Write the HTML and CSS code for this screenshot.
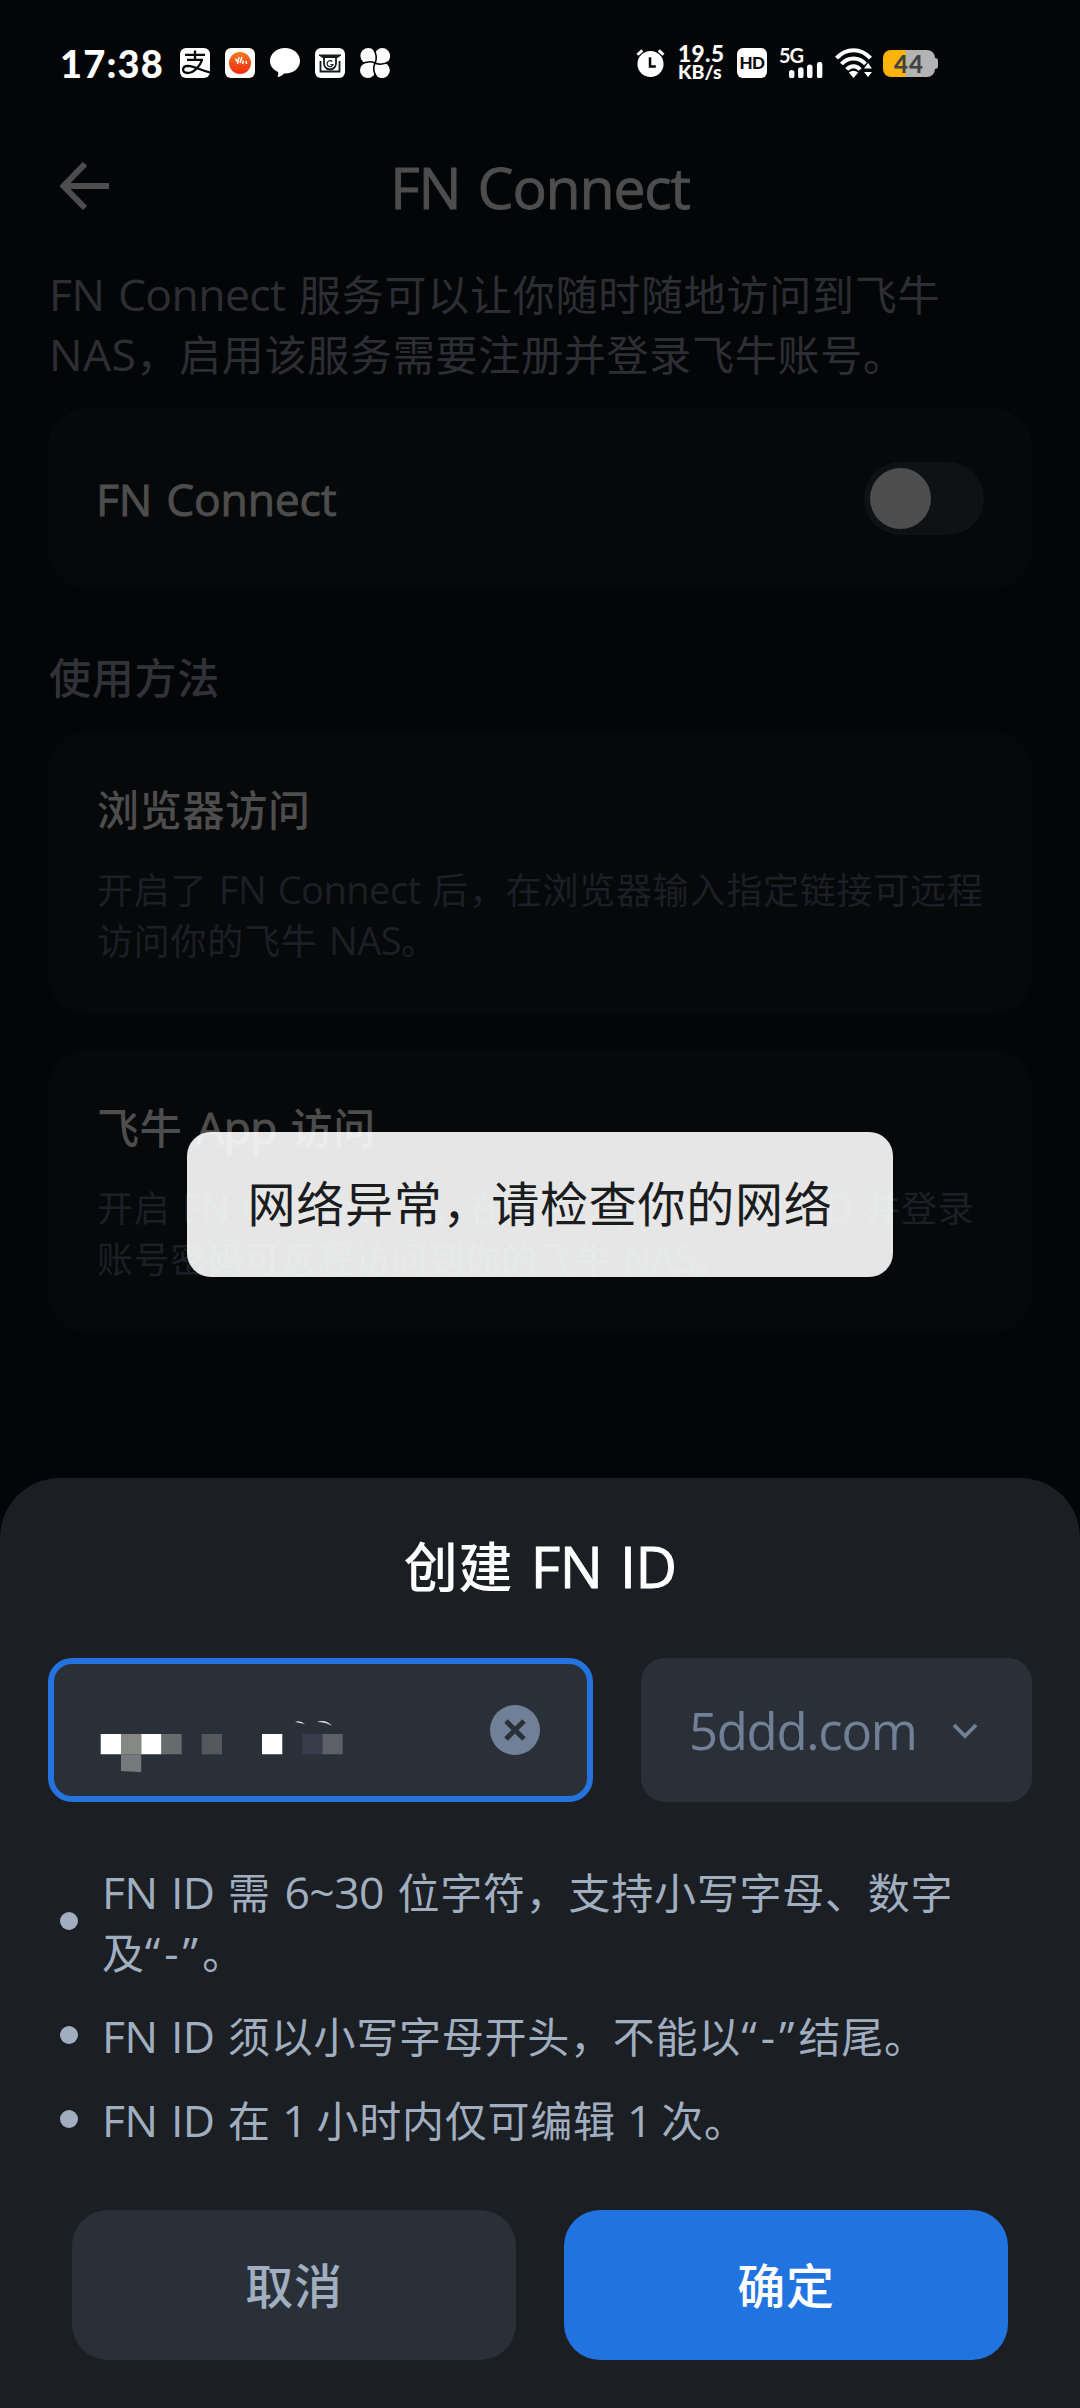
FILE: index.html
```html
<!DOCTYPE html>
<html lang="zh-CN">
<head>
<meta charset="utf-8">
<title>FN Connect</title>
<link rel="stylesheet" href="styles.css">
</head>
<body>
<div class="screen">
  <header class="status">
    <div class="status-left">
      <span class="clock">17:38</span>
      <svg class="app-icon" viewBox="0 0 30 30"><rect width="30" height="30" rx="6" fill="#fff"/><g fill="none" stroke="#050608" stroke-width="2.3"><path d="M5 6.8h20M15 2.5v9M7 11.8h16"/><path d="M22 12C20 18 14 25 7.500 25C1.500 25 1.500 18 8 17.800C14 18 20 22 30 24.500" /></g></svg>
      <svg class="app-icon" viewBox="0 0 30 30"><defs><linearGradient id="o" x1="0" y1="0" x2="0" y2="1"><stop offset="0" stop-color="#f47a1c"/><stop offset="1" stop-color="#f02a10"/></linearGradient></defs><rect width="30" height="30" rx="6" fill="#fff"/><circle cx="15" cy="15" r="11" fill="url(#o)"/><path d="M10.500 10.500l1.500 3M14 9l-1.500 7M17 9l-2 6M18.500 12.500l-1 3.500M21 13l.5 3" stroke="#fff" stroke-width="1.500" fill="none"/></svg>
      <svg class="app-icon" viewBox="0 0 30 30"><path d="M15 0C23.500 0 30 5.800 30 13S23.500 25.500 15 25.500L14 25.500C12 27.500 9.500 29 7.500 29C8.300 27.500 8.500 25.500 8 24C3 21.700 0 17.800 0 13C0 5.800 6.500 0 15 0Z" fill="#fff"/></svg>
      <svg class="app-icon" viewBox="0 0 30 30"><rect width="30" height="30" rx="6" fill="#fff"/><g fill="none" stroke="#181a1c" stroke-width="1.800"><path d="M5.500 13v10.500h19V13"/><path d="M4 7h22l-3.500 2.500H7.500z" fill="#181a1c" stroke-width="1"/><path d="M9 10v5.500a6 6 0 0 0 12 0V10"/><path d="M17.300 13.500a3 3 0 1 0 .7 3h-2.500" stroke-width="1.200"/></g></svg>
      <svg class="app-icon" viewBox="0 0 30 30"><g fill="#fff"><circle cx="8.200" cy="7.800" r="7.800"/><circle cx="22.300" cy="7.900" r="7.800"/><circle cx="7.800" cy="22.200" r="7.800"/><circle cx="22" cy="22.300" r="7.800"/><circle cx="15" cy="15" r="5"/></g><path d="M15 15C17.500 10 16 5 13.500 1M15 15C20 17.500 25 16 29.500 13.500M15 15C12.500 20 14 25 16.500 29M15 15C10 12.500 5 14 .5 16.500" fill="none" stroke="#050608" stroke-width="1.600"/></svg>
    </div>
    <div class="status-right">
      <svg class="alarm" viewBox="0 0 30 30"><circle cx="15" cy="16" r="13.500" fill="#fff"/><path d="M1.500 6.500l5-4.500M28.500 6.500l-5-4.500" stroke="#fff" stroke-width="3"/><path d="M14.500 9v9.500h6" fill="none" stroke="#050608" stroke-width="2.600"/></svg>
      <span class="speed"><b>19.5</b><b class="unit">KB/s</b></span>
      <span class="hd">HD</span>
      <span class="signal"><b>5G</b>
        <svg viewBox="0 0 36 17"><path d="M2.800 11.500v3M12.500 8.500v6M22 5.500v9M32.500 2.800v11.700" stroke="#fff" stroke-width="5.800" stroke-linecap="round"/></svg>
      </span>
      <svg class="wifi" viewBox="0 0 38 30"><g fill="none" stroke="#fff" stroke-width="4"><path d="M1.500 10.200C11-.5 26-.5 35.500 10.200"/><path d="M6.500 16C13 8.500 24 8.500 30.500 16"/><path d="M11.800 21.500C15.500 17 21.500 17 25.200 21.500"/></g><path d="M13.800 24.500Q18.500 21 23.200 24.500L18.500 30Z" fill="#fff"/><path d="M28 21l5-7 5 7zM28 23.500l5 6.500 5-6.500z" fill="#fff" stroke="#050608" stroke-width="1.200"/></svg>
      <span class="battery"><b>44</b></span>
    </div>
  </header>

  <nav class="topbar">
    <svg class="back" viewBox="0 0 50 48"><path d="M25 2L3.500 24L25 46M4 24H49" fill="none" stroke="#4d4d4d" stroke-width="6"/></svg>
    <h1 class="topbar-title"><span class="en">FN Connect</span></h1>
  </nav>

  <main class="content">
    <p class="intro"><span class="en">FN Connect </span>服务可以让你随时随地访问到飞牛<br><span class="en loose">NAS</span>，启用该服务需要注册并登录飞牛账号。</p>
    <section class="card switch-card">
      <span class="switch-label"><span class="en">FN Connect</span></span>
      <span class="switch"><i class="knob"></i></span>
    </section>
    <h2 class="section-title">使用方法</h2>
    <section class="card method">
      <h3>浏览器访问</h3>
      <p>开启了<span class="en"> FN Connect </span>后，在浏览器输入指定链接可远程<br>访问你的飞牛<span class="en"> NAS</span>。</p>
    </section>
    <section class="card method">
      <h3>飞牛<span class="en"> App </span>访问</h3>
      <p>开启<span class="en"> FN Connect </span>后，在飞牛<span class="en"> App </span>输入<span class="en"> FN ID </span>并登录<br>账号密码可远程访问到你的飞牛<span class="en"> NAS</span>。</p>
    </section>
  </main>

  <div class="toast">网络异常，请检查你的网络</div>

  <section class="sheet">
    <h2 class="sheet-title">创建<span class="en"> FN ID</span></h2>
    <div class="fields">
      <div class="input">
        <svg class="masked" viewBox="0 0 243 54"><g transform="translate(0.700 16)"><path d="M0 0h20.300v20.300H0zM40.500 0h20.300v20.300H40.500zM161.300 0h20.300v20.300h-20.300z" fill="#fff"/><path d="M20.300 0h20.200v20.300H20.300z" fill="#868884"/><path d="M60.800 0h20.200v20.300H60.800z" fill="#666b6d"/><path d="M101 0h20.300v20.300H101z" fill="#57585b"/><path d="M201.600 0h20.200v20.300h-20.200z" fill="#3b3c4b"/><path d="M221.800 0h20.200v20.300h-20.200z" fill="#5e5f67"/><path d="M20.300 20.300h20.200v17.800l-20.200-1z" fill="#747a7c"/></g><path d="M195 4q5-2 10 2q-5-1-10-2zM217 4q9-3 15 4q-6-4-15-4z" fill="#dfe1e3"/></svg>
        <svg class="clear" viewBox="0 0 50 50"><circle cx="25" cy="25" r="25" fill="#718096"/><path d="M16 16l18 18M34 16l-18 18" stroke="#293038" stroke-width="5"/></svg>
      </div>
      <div class="select"><span class="en">5ddd.com</span>
        <svg class="chevron" viewBox="0 0 26 16"><path d="M2 2l11 11L24 2" fill="none" stroke="#718096" stroke-width="3.800"/></svg>
      </div>
    </div>
    <ul class="rules">
      <li><span><span class="en">FN ID </span>需<span class="en"> 6~30 </span>位字符，支持小写字母、数字<br>及<span class="en quoted">“-”</span>。</span></li>
      <li><span><span class="en">FN ID </span>须以小写字母开头，不能以<span class="en quoted">“-”</span>结尾。</span></li>
      <li><span><span class="en">FN ID </span>在<span class="en tight"> 1 </span>小时内仅可编辑<span class="en tight"> 1 </span>次。</span></li>
    </ul>
    <div class="actions">
      <button class="btn cancel">取消</button>
      <button class="btn confirm">确定</button>
    </div>
  </section>
</div>
</body>
</html>
```
FILE: styles.css
```css
* { box-sizing: border-box; margin: 0; padding: 0; }
body {
  background: #040507;
  font-family: "Noto Sans CJK SC", sans-serif;
  letter-spacing: 0.75px;
}
.screen {
  position: relative;
  width: 1080px;
  height: 2408px;
  overflow: hidden;
  background: #040507;
}
.en {
  font-family: "Open Sans", "Noto Sans CJK SC", sans-serif;
  font-size: 1.06em;
  letter-spacing: -0.6px;
  word-spacing: 0.06em;
  line-height: 0;
  white-space: pre;
}
.loose { letter-spacing: 0.4px; }
.quoted { letter-spacing: 4px; }
.tight { letter-spacing: -2.8px; }
svg { display: block; }

/* status bar */
.status {
  height: 126px;
  padding: 0 142px 0 60px;
  display: flex;
  justify-content: space-between;
  align-items: center;
  color: #fff;
  font-family: Lato, sans-serif;
}
.status-left, .status-right { display: flex; align-items: center; }
.status-left { gap: 15px; }
.clock {
  width: 105px;
  font-size: 38px;
  font-weight: 900;
  letter-spacing: 1.2px;
}
.app-icon { width: 30px; height: 30px; }
.alarm { width: 29px; height: 30px; }
.speed {
  width: 47px;
  margin-left: 13px;
  display: flex;
  flex-direction: column;
  font-size: 22.5px;
  line-height: 18px;
  letter-spacing: 0.5px;
  font-weight: 900;
}
.speed b { font-weight: 900; }
.speed .unit { font-size: 19.5px; letter-spacing: 0; }
.hd {
  width: 30px;
  height: 30px;
  margin-left: 12px;
  border-radius: 6px;
  background: #fff;
  color: #0a0b0d;
  font: 900 17px/30px Lato, sans-serif;
  letter-spacing: -0.5px;
  text-align: center;
}
.signal {
  width: 45px;
  height: 30px;
  margin-left: 12px;
  display: flex;
  flex-direction: column;
  justify-content: space-between;
}
.signal b { font: 700 20px/14px Lato, sans-serif; letter-spacing: -1px; }
.signal svg { width: 36px; height: 17px; margin-left: 9px; }
.wifi { width: 38px; height: 30px; margin-left: 11px; }
.battery {
  position: relative;
  width: 52px;
  height: 27px;
  margin: 1px 3px 0 10px;
  border-radius: 8px;
  background: linear-gradient(90deg, #fbb40c 44%, #b3b3b3 44%);
  color: #424242;
  text-align: center;
}
.battery::after {
  content: "";
  position: absolute;
  right: -3px;
  top: 8px;
  width: 4px;
  height: 11px;
  border-radius: 0 3px 3px 0;
  background: #b3b3b3;
}
.battery b { display: block; font: 900 24px/27px Lato, sans-serif; letter-spacing: 1px; }

/* page under the sheet */
.topbar {
  height: 136px;
  padding: 36px 60px 0;
  display: grid;
  grid-template-columns: 50px 1fr 50px;
}
.back { width: 50px; height: 48px; }
.topbar-title {
  color: #4d4d4d;
  font-size: 54px;
  font-weight: 500;
  line-height: 48px;
  text-align: center;
}
.topbar-title .en { letter-spacing: -1.2px; }
.topbar-title .en, .sheet-title .en, .switch-label .en, .method h3 .en {
  -webkit-text-stroke: 0.9px currentColor;
}
.content { padding: 0 48px; }
.intro {
  padding: 1px 0 0 1px;
  color: #2c2e33;
  font-size: 42px;
  line-height: 60px;
}
.card { border-radius: 38px; background: #070809; }
.switch-card {
  height: 180px;
  margin-top: 25px;
  padding: 0 48px;
  display: flex;
  align-items: center;
  justify-content: space-between;
}
.switch-label { color: #4d4d4d; font-size: 42px; font-weight: 500; line-height: 60px; }
.switch-label .en { letter-spacing: -0.2px; }
.switch {
  width: 120px;
  height: 73px;
  padding: 6px;
  border-radius: 37px;
  background: #0e1215;
}
.knob { display: block; width: 61px; height: 61px; border-radius: 50%; background: #4d4d4d; }
.section-title {
  margin-top: 58px;
  padding-left: 1px;
  color: #303237;
  font-size: 42px;
  font-weight: 500;
  line-height: 60px;
}
.method { height: 282px; margin-top: 26px; padding: 46px 49px 0; }
.method + .method { margin-top: 36px; }
.method h3 { color: #4d4d4d; font-size: 42px; font-weight: 500; line-height: 60px; }
.method p { margin-top: 25px; color: #1c1f25; font-size: 36px; line-height: 51px; white-space: nowrap; }

.toast {
  position: absolute;
  left: 187px;
  top: 1132px;
  width: 706px;
  height: 145px;
  border-radius: 24px;
  background: rgba(255, 255, 255, 0.9);
  color: #1a1c20;
  font-size: 48px;
  line-height: 138px;
  text-align: center;
}

/* bottom sheet */
.sheet {
  position: absolute;
  left: 0;
  right: 0;
  bottom: 0;
  height: 930px;
  padding: 49px 48px 0;
  border-radius: 60px 60px 0 0;
  background: #1b1e23;
}
.sheet-title {
  color: #fff;
  font-size: 54px;
  font-weight: 500;
  line-height: 76px;
  text-align: center;
}
.fields { height: 144px; margin-top: 55px; display: flex; gap: 48px; }
.input, .select {
  display: flex;
  align-items: center;
  justify-content: space-between;
  border-radius: 24px;
  background: #293038;
}
.input { width: 545px; padding: 0 47px 0 46px; border: 6px solid #2473de; }
.masked { width: 243px; height: 54px; margin-top: 30px; }
.clear { width: 50px; height: 50px; }
.select {
  flex: 1;
  padding: 2px 54px 0 48px;
  color: #718096;
  font-size: 48px;
}
.select .en { letter-spacing: -1.3px; }
.chevron { width: 26px; height: 16px; }
.rules {
  margin-top: 59px;
  padding-left: 12px;
  display: flex;
  flex-direction: column;
  gap: 24px;
  list-style: none;
  color: #a0aec0;
  font-size: 42px;
  line-height: 60px;
}
.rules li { display: flex; align-items: center; gap: 24px; white-space: nowrap; }
.rules li::before {
  content: "";
  width: 18px;
  height: 18px;
  border-radius: 50%;
  background: #a0aec0;
}
.actions { margin-top: 61px; padding: 0 24px; display: flex; gap: 48px; }
.btn {
  flex: 1;
  height: 150px;
  padding-bottom: 5px;
  border: 0;
  border-radius: 36px;
  font: 500 48px/70px "Noto Sans CJK SC", sans-serif;
  letter-spacing: 0.75px;
}
.cancel { background: #293038; color: #a0aec0; }
.confirm { background: #2173df; color: #fff; }
```
